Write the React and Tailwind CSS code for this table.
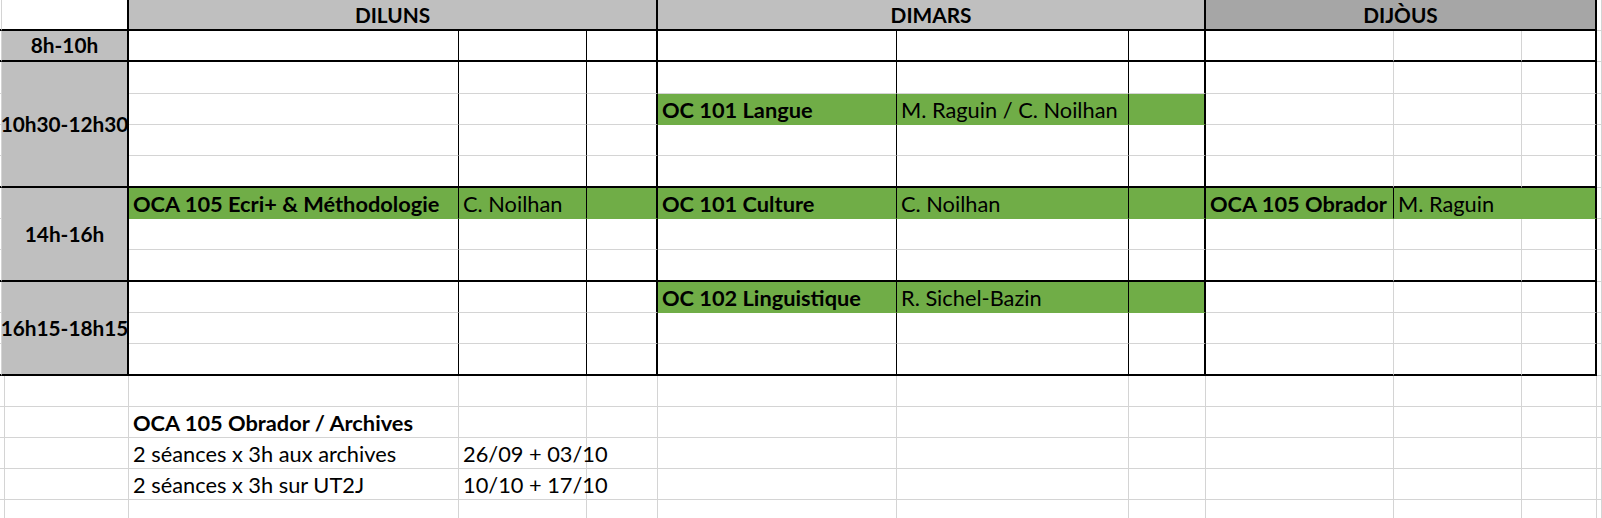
import React from 'react';

// border helpers: right / bottom edge of each cell
const R = {
    g: 'border-r border-r-[#d4d4d4]',
    b: 'border-r border-r-black',
    t: 'border-r-2 border-r-black',
    v: 'border-r border-r-[#70ad47]',
};
const B = {
    g: 'border-b border-b-[#d4d4d4]',
    t: 'border-b-2 border-b-black',
    v: 'border-b border-b-[#70ad47]',
    n: '',
};

const GREEN = 'bg-[#70ad47]';

// bottom edge of each body row (8h-10h ... 16h15-18h15)
const ROW_BOTTOM = ['t', 'g', 'g', 'g', 't', 'g', 'g', 't', 'g', 'g', 't'];

const TIMES = [
    { start: 0, label: '8h-10h', span: '' },
    { start: 1, label: '10h30-12h30', span: 'row-span-4' },
    { start: 5, label: '14h-16h', span: 'row-span-3' },
    { start: 8, label: '16h15-18h15', span: 'row-span-3' },
];

// courses: row index -> day index -> [course, teacher]
const COURSES = {
    2: { 1: ['OC 101 Langue', 'M. Raguin / C. Noilhan'] },
    5: {
        0: ['OCA 105 Ecri+ & Méthodologie', 'C. Noilhan'],
        1: ['OC 101 Culture', 'C. Noilhan'],
        2: ['OCA 105 Obrador', 'M. Raguin'],
    },
    8: { 1: ['OC 102 Linguistique', 'R. Sichel-Bazin'] },
};

const Cell = ({ className = '', bold, children }) => (
    <div className={`flex items-end whitespace-nowrap leading-none pb-[3px] pl-[4px] ${bold ? 'font-bold' : ''} ${className}`}>
        {children}
    </div>
);

const Header = ({ bg, children }) => (
    <div className={`col-span-3 ${bg} ${R.t} ${B.t} flex items-end justify-center pb-[3px] font-bold leading-none text-[20.8px]`}>
        {children}
    </div>
);

const App = () => {
    const body = [];

    ROW_BOTTOM.forEach((bt, ri) => {
        body.push(<div key={`l${ri}`} className={`${R.g} ${B[bt]}`}></div>);

        const time = TIMES.find(t => t.start === ri);
        if (time) {
            body.push(
                <div
                    key={`t${ri}`}
                    className={`${time.span} bg-[#bfbfbf] ${R.t} ${B.t} flex items-center justify-center overflow-hidden whitespace-nowrap font-bold leading-none text-[20.8px]`}
                >
                    {time.label}
                </div>
            );
        }

        [0, 1, 2].forEach(day => {
            const course = COURSES[ri] && COURSES[ri][day];
            const thursday = day === 2;
            for (let c = 0; c < 3; c++) {
                let right = c === 2 ? R.t : thursday ? R.g : R.b;
                let bottom = B[bt];
                let bg = '';
                if (course) {
                    bg = GREEN;
                    if (bt === 'g') bottom = B.v;
                    if (thursday && c === 0) right = R.b;
                    if (thursday && c === 1) right = R.v;
                }
                body.push(
                    <Cell key={`c${ri}-${day}-${c}`} bold={course && c === 0} className={`${bg} ${right} ${bottom}`}>
                        {course && c < 2 ? course[c] : null}
                    </Cell>
                );
            }
        });

        body.push(<div key={`r${ri}`} className={`${R.g} ${B.g}`}></div>);
    });

    const notes = [
        [],
        [<span key="a" className="font-bold">OCA 105 Obrador / Archives</span>],
        ['2 séances x 3h aux archives', '26/09 + 03/10'],
        ['2 séances x 3h sur UT2J', '10/10 + 17/10'],
        [],
    ];

    return (
        <div className="w-[1602px] h-[518px] overflow-hidden bg-white text-black text-[21.8px] font-[Lato,'Open_Sans',sans-serif]">
            <div className="grid grid-cols-[2px_127px_330px_128px_71px_239px_232px_77px_188px_128px_75px_5px] grid-rows-[31px_31px_32px_31px_31px_32px_31px_31px_32px_31px_31px_32px_31px_31px_31px_31px_18px]">
                {/* header */}
                <div className={`${R.g} ${B.t}`}></div>
                <div className={`${R.t} ${B.t}`}></div>
                <Header bg="bg-[#bfbfbf]">DILUNS</Header>
                <Header bg="bg-[#bfbfbf]">DIMARS</Header>
                <Header bg="bg-[#a6a6a6]">DIJÒUS</Header>
                <div className={`${R.g} ${B.g}`}></div>

                {body}

                {/* notes under the timetable */}
                {notes.map((row, ni) => {
                    const bottom = ni === notes.length - 1 ? '' : B.g;
                    return (
                        <React.Fragment key={`n${ni}`}>
                            {Array.from({ length: 12 }).map((_, ci) => (
                                <Cell key={ci} className={`${R.g} ${bottom}`}>
                                    {ci === 2 ? row[0] : ci === 3 ? row[1] : null}
                                </Cell>
                            ))}
                        </React.Fragment>
                    );
                })}
            </div>
        </div>
    );
};

export default App;
